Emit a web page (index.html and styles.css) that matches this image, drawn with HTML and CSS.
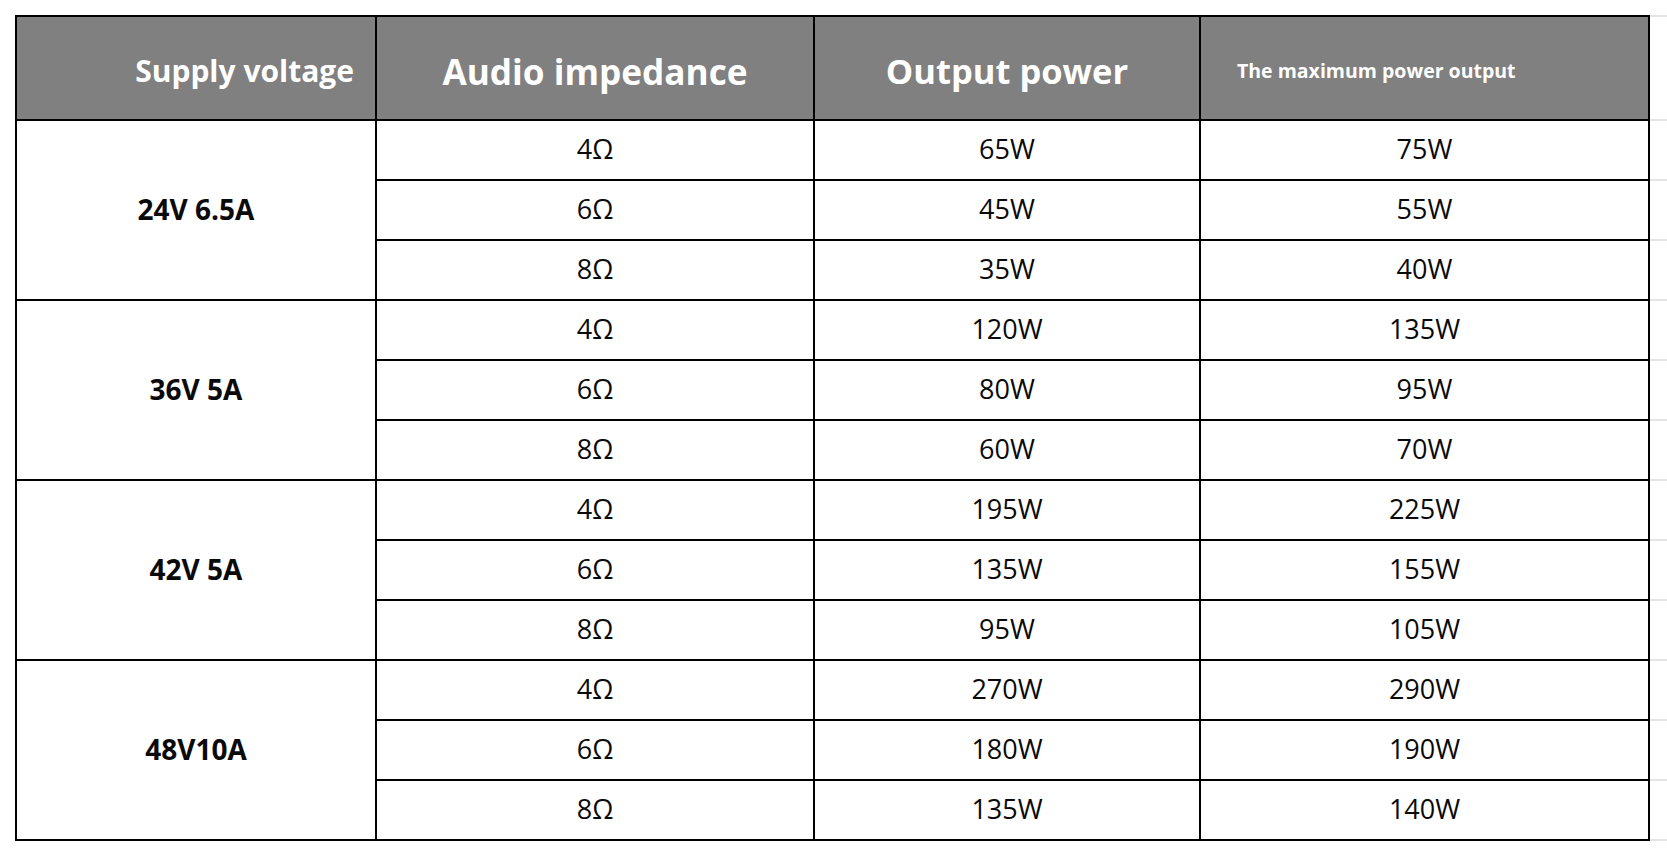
FILE: index.html
```html
<!DOCTYPE html>
<html lang="en">
<head>
<meta charset="utf-8">
<title>Power table</title>
<link rel="stylesheet" href="styles.css">
</head>
<body>
<div class="page">
<table class="spec">
  <colgroup>
    <col class="c1"><col class="c2"><col class="c3"><col class="c4"><col class="c5">
  </colgroup>
  <thead>
    <tr>
      <th class="first h-supply">Supply voltage</th>
      <th class="h-big h-audio">Audio impedance</th>
      <th class="h-big">Output power</th>
      <th class="h-max">The maximum power output</th>
      <th class="filler"></th>
    </tr>
  </thead>
  <tbody>
    <tr><td class="first group" rowspan="3">24V 6.5A</td><td>4Ω</td><td>65W</td><td>75W</td><td class="filler"></td></tr>
    <tr><td>6Ω</td><td>45W</td><td>55W</td><td class="filler"></td></tr>
    <tr><td>8Ω</td><td>35W</td><td>40W</td><td class="filler"></td></tr>
    <tr><td class="first group" rowspan="3">36V 5A</td><td>4Ω</td><td>120W</td><td>135W</td><td class="filler"></td></tr>
    <tr><td>6Ω</td><td>80W</td><td>95W</td><td class="filler"></td></tr>
    <tr><td>8Ω</td><td>60W</td><td>70W</td><td class="filler"></td></tr>
    <tr><td class="first group" rowspan="3">42V 5A</td><td>4Ω</td><td>195W</td><td>225W</td><td class="filler"></td></tr>
    <tr><td>6Ω</td><td>135W</td><td>155W</td><td class="filler"></td></tr>
    <tr><td>8Ω</td><td>95W</td><td>105W</td><td class="filler"></td></tr>
    <tr><td class="first group" rowspan="3">48V10A</td><td>4Ω</td><td>270W</td><td>290W</td><td class="filler"></td></tr>
    <tr><td>6Ω</td><td>180W</td><td>190W</td><td class="filler"></td></tr>
    <tr><td>8Ω</td><td>135W</td><td>140W</td><td class="filler"></td></tr>
  </tbody>
</table>
</div>
</body>
</html>
```
FILE: styles.css
```css
html, body {
  margin: 0;
  padding: 0;
  background: #ffffff;
}

.page {
  padding: 15px 0 0 15px;
  font-family: "Open Sans", "Noto Sans", "DejaVu Sans", sans-serif;
  color: #0a0a0a;
}

.spec {
  border-collapse: separate;
  border-spacing: 0;
  table-layout: fixed;
  width: 1652px;
}

.c1 { width: 362px; }
.c2 { width: 438px; }
.c3 { width: 386px; }
.c4 { width: 449px; }
.c5 { width: 17px; }

.spec th,
.spec td {
  box-sizing: border-box;
  padding: 0;
  border-right: 2px solid #000;
  border-bottom: 2px solid #000;
  text-align: center;
  vertical-align: middle;
  white-space: nowrap;
  line-height: 1.2;
}

.spec thead tr { height: 106px; }
.spec tbody tr { height: 60px; }

.spec th {
  background: #808080;
  color: #ffffff;
  font-weight: 700;
  border-top: 2px solid #000;
  padding-top: 6px;
}

.spec .first { border-left: 2px solid #000; }

.spec th.h-supply {
  font-size: 30px;
  text-align: right;
  padding-right: 21px;
}

.spec th.h-big { font-size: 34.5px; }

.spec th.h-audio { font-size: 35.2px; }

.spec th.h-max {
  font-size: 19.5px;
  text-align: left;
  padding-left: 36px;
}

.spec td {
  font-size: 27px;
  font-weight: 400;
  padding-bottom: 1px;
}

.spec td.group {
  font-size: 28px;
  font-weight: 700;
}

.spec th.filler,
.spec td.filler {
  background: #ffffff;
  border-right: none;
  border-bottom: 2px solid #e4e4e4;
}

.spec th.filler { border-top: 2px solid #e4e4e4; }
```
